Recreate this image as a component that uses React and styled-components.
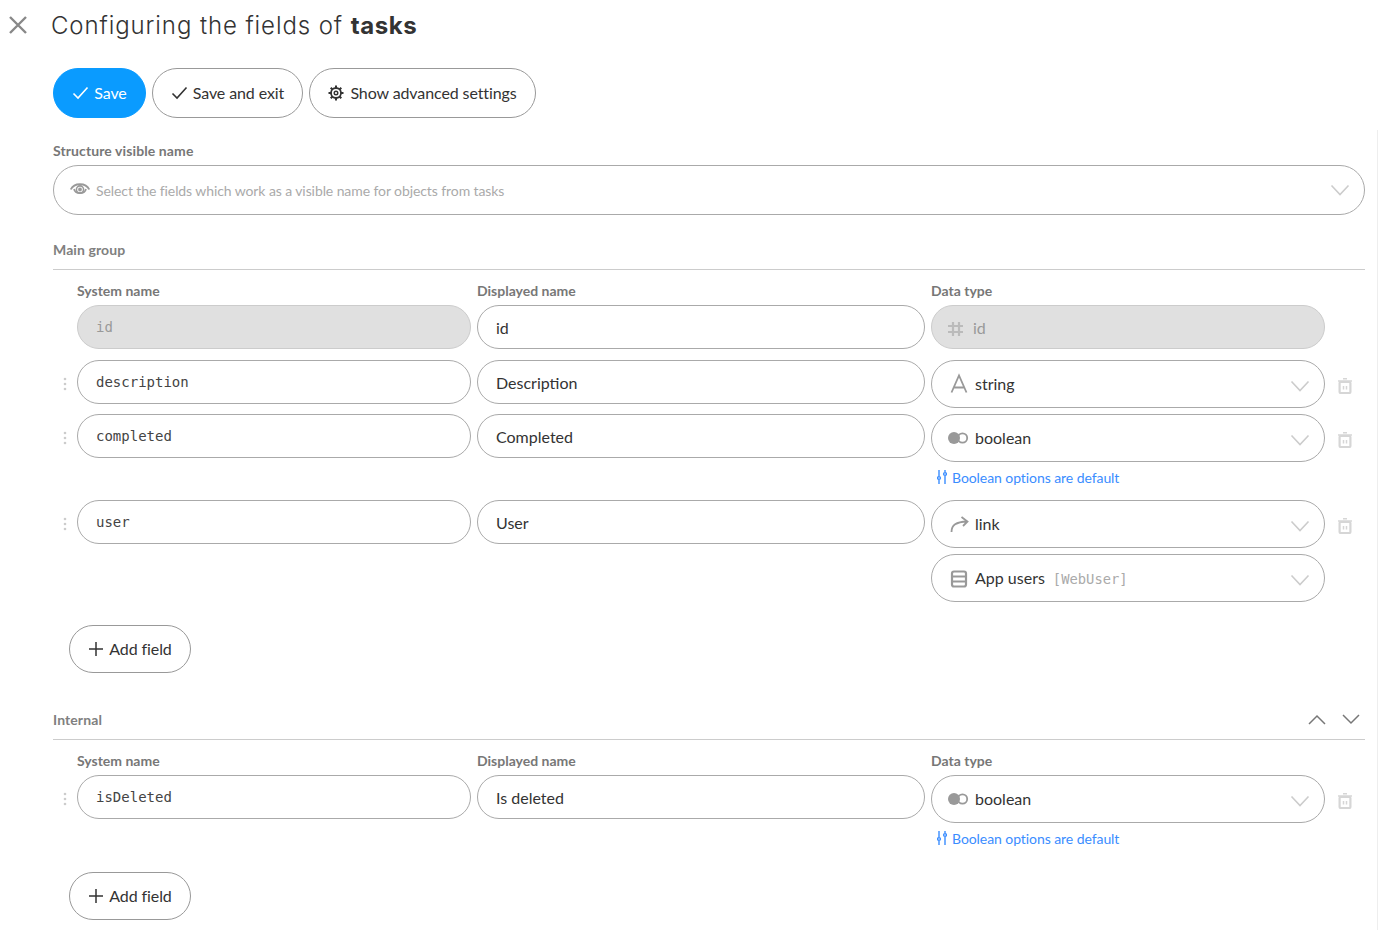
import React from 'react';
import styled, { createGlobalStyle } from 'styled-components';

const GlobalStyle = createGlobalStyle`
  html, body { margin: 0; padding: 0; background: #fff; }
  body { font-family: Lato, "Liberation Sans", sans-serif; color: #333; overflow: hidden; }
  * { box-sizing: border-box; }
`;

const Page = styled.div`
  position: relative;
  width: 1379px;
  height: 930px;
  overflow: hidden;
`;
const ScrollEdge = styled.div`
  position: absolute;
  top: 130px;
  bottom: 0;
  right: 1px;
  width: 1px;
  background: #eee;
`;
const Header = styled.header`
  display: flex;
  align-items: center;
  height: 50px;
  padding-left: 8px;
  gap: 23px;
`;
const Close = styled.svg`
  width: 20px;
  height: 20px;
  color: #888;
`;
const Title = styled.h1`
  margin: 0;
  font-family: Inter, "Open Sans", sans-serif;
  font-size: 24px;
  font-weight: 300;
  letter-spacing: 0.9px;
  color: #333;
  b { font-weight: 700; letter-spacing: 0.6px; }
`;
const Content = styled.main`
  padding: 18px 14px 0 53px;
`;
const Toolbar = styled.div`
  display: flex;
  gap: 6px;
`;
const Pill = styled.button`
  display: inline-flex;
  align-items: center;
  justify-content: center;
  gap: ${p => p.$gap || 5}px;
  width: ${p => p.$w}px;
  height: ${p => p.$h || 50}px;
  padding: 0 0 2px;
  border: 1px solid ${p => (p.$primary ? '#0a9bff' : '#999')};
  border-radius: 25px;
  background: ${p => (p.$primary ? '#0a9bff' : '#fff')};
  color: ${p => (p.$primary ? '#fff' : '#333')};
  font-family: inherit;
  font-size: 16px;
  letter-spacing: -0.1px;
  svg { margin-top: 2px; }
`;
const Label = styled.div`
  font-size: 14px;
  font-weight: 700;
  line-height: 18px;
  color: #777;
`;
const VisibleLabel = styled(Label)`
  margin: 24px 0 5px;
  letter-spacing: 0.1px;
`;
const VisibleSelect = styled.div`
  display: flex;
  align-items: center;
  gap: 6px;
  height: 50px;
  padding: 0 14px 0 16px;
  border: 1px solid #aaa;
  border-radius: 25px;
  font-size: 14px;
  letter-spacing: -0.09px;
  color: #aaa;
`;
const Grow = styled.span`
  flex: 1;
`;
const GroupHead = styled.div`
  display: flex;
  align-items: center;
  justify-content: space-between;
  height: 30px;
  margin-top: ${p => p.$top}px;
  border-bottom: 1px solid #ccc;
  padding-bottom: 10px;
  ${Label} { letter-spacing: 0.1px; color: #808080; }
`;
const GroupArrows = styled.div`
  display: flex;
  gap: 16px;
  margin-right: 5px;
  color: #777;
`;
const grid = '18px 394px 448px 394px 34px';
const Columns = styled.div`
  display: grid;
  grid-template-columns: ${grid};
  column-gap: 6px;
  margin-top: 12px;
  margin-bottom: 5px;
  ${Label}:first-child { grid-column: 2; }
`;
const Row = styled.div`
  display: grid;
  grid-template-columns: ${grid};
  column-gap: 6px;
  margin-bottom: ${p => p.$after}px;
`;
const Handle = styled.svg`
  grid-column: 1;
  width: 4px;
  height: 14px;
  margin: 17px 0 0 10px;
  color: #ccc;
`;
const TextBox = styled.div`
  display: flex;
  align-items: center;
  height: 44px;
  padding: 0 18px;
  border: 1px solid ${p => (p.$disabled ? '#ccc' : '#aaa')};
  border-radius: 22px;
  background: ${p => (p.$disabled ? '#e0e0e0' : '#fff')};
  color: ${p => (p.$disabled ? '#999' : '#333')};
  font-size: 16px;
`;
const MonoBox = styled(TextBox)`
  grid-column: 2;
  font-family: "DejaVu Sans Mono", "Liberation Mono", monospace;
  font-size: 14px;
  color: ${p => (p.$disabled ? '#999' : '#444')};
`;
const TypeColumn = styled.div`
  grid-column: 4;
  display: flex;
  flex-direction: column;
  gap: 6px;
`;
const TypeBox = styled.div`
  display: flex;
  align-items: center;
  height: ${p => (p.$disabled ? 44 : 48)}px;
  padding: 0 14px ${p => (p.$disabled ? 0 : 2)}px 16px;
  border: 1px solid ${p => (p.$disabled ? '#ccc' : '#aaa')};
  border-radius: 24px;
  background: ${p => (p.$disabled ? '#e0e0e0' : '#fff')};
  color: ${p => (p.$disabled ? '#999' : '#333')};
  font-size: 16px;
`;
const TypeIcon = styled.svg`
  flex: none;
  width: 22px;
  height: 22px;
  margin-top: ${p => (p.$disabled ? 0 : 2)}px;
  margin-right: ${p => (p.$disabled ? 3 : 5)}px;
  color: ${p => (p.$disabled ? '#bbb' : '#999')};
`;
const Entity = styled.span`
  margin: 4px 0 0 8px;
  font-family: "DejaVu Sans Mono", "Liberation Mono", monospace;
  font-size: 13.8px;
  color: #aaa;
`;
const Chevron = styled.svg`
  flex: none;
  width: 20px;
  height: 12px;
  margin-top: ${p => p.$drop}px;
  color: ${p => p.$color || '#ccc'};
`;
const Trash = styled.svg`
  grid-column: 5;
  width: 14px;
  height: 16px;
  margin: 18px 0 0 7px;
  color: #d6d6d6;
`;
const Hint = styled.div`
  display: flex;
  align-items: center;
  gap: 5px;
  height: 16px;
  margin: 1px 0 9px 6px;
  color: #3a8dff;
  font-size: 14px;
  letter-spacing: -0.07px;
`;
const AddRow = styled.div`
  padding-left: 16px;
  margin-top: ${p => p.$top}px;
`;

const ChevronDown = ({ color, drop = 0 }) => (
  <Chevron viewBox="0 0 20 12" $color={color} $drop={drop} fill="none" stroke="currentColor" strokeWidth="1.6">
    <path d="M1.500 1.500 10 10.500 18.500 1.500" />
  </Chevron>
);
const Check = () => (
  <svg width="17" height="14" viewBox="0 0 17 14" fill="none" stroke="currentColor" strokeWidth="1.6">
    <path d="M1.500 7.500 6 12 15.500 1.500" />
  </svg>
);
const Gear = () => (
  <svg width="16" height="16" viewBox="0 0 16 16" fill="none" stroke="currentColor">
    <circle cx="8" cy="8" r="5" strokeWidth="1.8" />
    <circle cx="8" cy="8" r="1.800" strokeWidth="1.4" />
    <path strokeWidth="2" d="M8 .5v2.500M8 13v2.500M.5 8H3M13 8h2.500M2.700 2.700l1.800 1.800M11.500 11.500l1.800 1.800M2.700 13.300l1.800-1.800M11.500 4.500l1.800-1.800" />
  </svg>
);
const Eye = () => (
  <svg width="20" height="14" viewBox="0 0 20 14" fill="none" stroke="#999" strokeWidth="1.6">
    <path d="M.8 6.500C4 -.5 16 -.5 19.200 6.500" strokeWidth="1.8" />
    <path d="M4 6C5 11.500 15 11.500 16 6" />
    <circle cx="10" cy="6.500" r="3.600" />
    <circle cx="10" cy="6.500" r="1.100" fill="#999" />
  </svg>
);
const Plus = () => (
  <svg width="16" height="16" viewBox="0 0 16 16" fill="none" stroke="currentColor" strokeWidth="1.5">
    <path d="M8 1v14M1 8h14" />
  </svg>
);
const Dots = () => (
  <Handle viewBox="0 0 4 14" fill="currentColor">
    <circle cx="2" cy="2" r="1.300" />
    <circle cx="2" cy="7" r="1.300" />
    <circle cx="2" cy="12" r="1.300" />
  </Handle>
);
const Bin = () => (
  <Trash viewBox="0 0 14 16" fill="none" stroke="currentColor">
    <path d="M0 3h14M5 .8h4" strokeWidth="1.500" />
    <rect x="1.600" y="4" width="10.800" height="11" rx="1" strokeWidth="2.200" />
    <path d="M5.500 8v3.500M8.500 8v3.500" strokeWidth="1.500" />
  </Trash>
);
const Sliders = () => (
  <svg width="10" height="14" viewBox="0 0 10 14" fill="none" stroke="#3a8dff" strokeWidth="1.400">
    <path d="M2 0v6M2 10v4M8 0v2M8 6v8" />
    <circle cx="2" cy="8" r="1.400" />
    <circle cx="8" cy="4" r="1.400" />
  </svg>
);

const typeIcons = {
  id: <path d="M5 6v14M11 6v14M0 10h15M0 16h15" fill="none" stroke="currentColor" strokeWidth="2.200" />,
  string: <path d="M3.500 19.500 11 2.500 18.500 19.500M6 14.500h10" fill="none" stroke="currentColor" strokeWidth="1.800" />,
  boolean: (
    <g>
      <circle cx="14.500" cy="11" r="4.700" fill="none" stroke="currentColor" strokeWidth="1.800" />
      <circle cx="6" cy="11" r="6" fill="currentColor" />
    </g>
  ),
  link: <path d="M3.500 19C3.500 12 8 9 19 8.500M13.500 4l6 4.500-4.500 4.500" fill="none" stroke="currentColor" strokeWidth="1.800" />,
  table: (
    <g fill="none" stroke="currentColor" strokeWidth="2.200">
      <rect x="4" y="4.500" width="14" height="15" rx="2" />
      <path d="M4 9.500h14M4 14.500h14" />
    </g>
  ),
};

const TypeSelect = ({ icon, children, disabled }) => (
  <TypeBox $disabled={disabled}>
    <TypeIcon viewBox="0 0 22 22" $disabled={disabled}>{typeIcons[icon]}</TypeIcon>
    {children}
    <Grow />
    {!disabled && <ChevronDown drop={6} />}
  </TypeBox>
);
const ColumnTitles = () => (
  <Columns>
    <Label>System name</Label>
    <Label>Displayed name</Label>
    <Label>Data type</Label>
  </Columns>
);
const AddField = () => (
  <Pill $w={122} $h={48}>
    <Plus />
    Add field
  </Pill>
);
const BooleanHint = () => (
  <Hint>
    <Sliders />
    Boolean options are default
  </Hint>
);

const App = () => (
  <Page>
    <GlobalStyle />
    <ScrollEdge />
    <Header>
      <Close viewBox="0 0 20 20" fill="none" stroke="currentColor" strokeWidth="2.400">
        <path d="M2 2 18 18M18 2 2 18" />
      </Close>
      <Title>
        Configuring the fields of <b>tasks</b>
      </Title>
    </Header>
    <Content>
      <Toolbar>
        <Pill $primary $w={93}>
          <Check />
          Save
        </Pill>
        <Pill $w={151}>
          <Check />
          Save and exit
        </Pill>
        <Pill $w={227} $gap={6}>
          <Gear />
          Show advanced settings
        </Pill>
      </Toolbar>

      <VisibleLabel>Structure visible name</VisibleLabel>
      <VisibleSelect>
        <Eye />
        Select the fields which work as a visible name for objects from tasks
        <Grow />
        <ChevronDown />
      </VisibleSelect>

      <GroupHead $top={25}>
        <Label>Main group</Label>
      </GroupHead>
      <ColumnTitles />
      <Row $after={11}>
        <MonoBox $disabled>id</MonoBox>
        <TextBox>id</TextBox>
        <TypeColumn>
          <TypeSelect icon="id" disabled>id</TypeSelect>
        </TypeColumn>
      </Row>
      <Row $after={6}>
        <Dots />
        <MonoBox>description</MonoBox>
        <TextBox>Description</TextBox>
        <TypeColumn>
          <TypeSelect icon="string">string</TypeSelect>
        </TypeColumn>
        <Bin />
      </Row>
      <Row $after={6}>
        <Dots />
        <MonoBox>completed</MonoBox>
        <TextBox>Completed</TextBox>
        <TypeColumn>
          <TypeSelect icon="boolean">boolean</TypeSelect>
          <BooleanHint />
        </TypeColumn>
        <Bin />
      </Row>
      <Row $after={0}>
        <Dots />
        <MonoBox>user</MonoBox>
        <TextBox>User</TextBox>
        <TypeColumn>
          <TypeSelect icon="link">link</TypeSelect>
          <TypeSelect icon="table">
            App users<Entity>[WebUser]</Entity>
          </TypeSelect>
        </TypeColumn>
        <Bin />
      </Row>
      <AddRow $top={23}>
        <AddField />
      </AddRow>

      <GroupHead $top={37}>
        <Label>Internal</Label>
        <GroupArrows>
          <svg width="18" height="11" viewBox="0 0 18 11" fill="none" stroke="currentColor" strokeWidth="1.500">
            <path d="M1 10 9 2l8 8" />
          </svg>
          <svg width="18" height="11" viewBox="0 0 18 11" fill="none" stroke="currentColor" strokeWidth="1.500">
            <path d="M1 1l8 8 8-8" />
          </svg>
        </GroupArrows>
      </GroupHead>
      <ColumnTitles />
      <Row $after={0}>
        <Dots />
        <MonoBox>isDeleted</MonoBox>
        <TextBox>Is deleted</TextBox>
        <TypeColumn>
          <TypeSelect icon="boolean">boolean</TypeSelect>
          <BooleanHint />
        </TypeColumn>
        <Bin />
      </Row>
      <AddRow $top={17}>
        <AddField />
      </AddRow>
    </Content>
  </Page>
);

export default App;
